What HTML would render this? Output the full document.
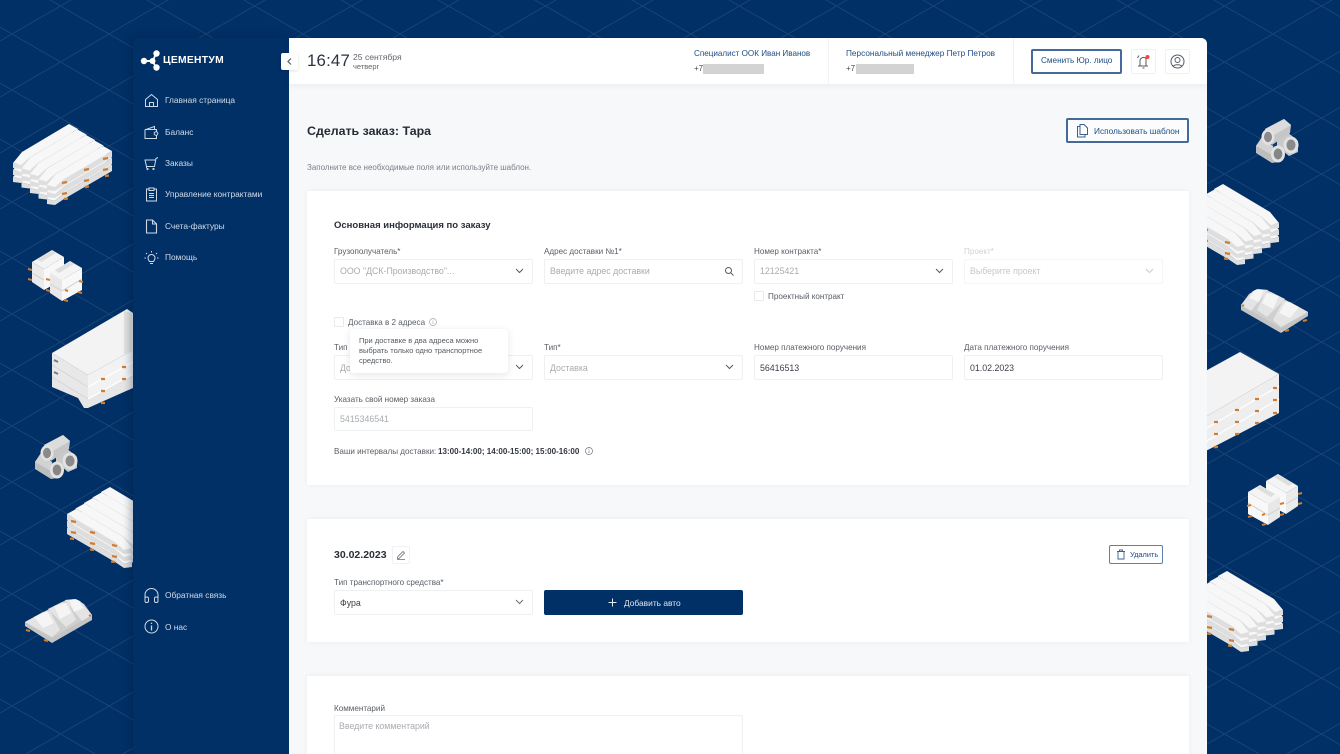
<!DOCTYPE html>
<html lang="ru"><head><meta charset="utf-8"><title>Цементум</title>
<style>
*{box-sizing:border-box}
html,body{margin:0;padding:0;width:1340px;height:754px;overflow:hidden;background:#003066;font-family:"Liberation Sans","Noto Sans CJK SC",sans-serif}
#bg{position:absolute;left:0;top:0;filter:blur(.35px)}
#side{position:absolute;left:133px;top:38px;width:157px;height:716px;background:#003066;border-radius:6px 0 0 0;box-shadow:-3px 0 8px rgba(0,20,50,.28)}
#main{position:absolute;left:289px;top:38px;width:918px;height:716px;background:#f6f8fa;border-radius:0 6px 0 0;overflow:hidden}
#abs{position:absolute;left:0;top:0;width:1340px;height:754px;overflow:hidden;filter:blur(.3px)}
.t{position:absolute;white-space:nowrap;line-height:12px;height:12px;font-size:8.1px;color:#5d636b}
.m{color:#d4dde8;font-size:8.35px}
.card{position:absolute;left:307px;width:882px;background:#fff;box-shadow:0 0 6px rgba(40,60,90,.05)}
.f{position:absolute;height:25px;width:199px;background:#fff;border:1px solid #eef1f2;border-radius:2px}
.ph{color:#a8abb0;font-size:8.8px}
.lb{color:#585d65;font-size:8.1px}
.val{color:#3a3f47;font-size:8.8px}
.cb{position:absolute;width:10px;height:10px;border:1px solid #e8eaec;background:#fff;border-radius:1px}
.btn{position:absolute;border:2px solid #45699a;border-radius:2px;background:#fff}
.box{position:absolute;background:#fff;border:1px solid #eff1f3;border-radius:2px}
svg.i{position:absolute;overflow:visible;fill:none}
</style></head><body>
<svg id="bg" width="1340" height="754" viewBox="0 0 1340 754">
<defs>
<pattern id="grid" x="12" y="34" width="97" height="56" patternUnits="userSpaceOnUse">
<path d="M0,0L97,56M97,0L0,56" stroke="#1e4577" stroke-width=".8" fill="none"/>
</pattern>
<g id="pile"><path d="M0,0L9,-11L56,-39L65,-34L17,-6L8,2Z" fill="#f7f7f7"/><path d="M0,0L8,2L17,-6L65,-34L65,-28L17,0L8,6L0,5Z" fill="#dedede"/></g>
<g id="col"><use href="#pile" y="14"/><use href="#pile" y="7"/><use href="#pile"/></g>
<g id="piles">
<use href="#col" x="13" y="163"/><use href="#col" x="21.5" y="168.5"/><use href="#col" x="30" y="174"/><use href="#col" x="38.500" y="179.500"/><use href="#col" x="47" y="185"/>
<g stroke="#cf7d33" stroke-width="2.200"><path d="M62,183l5,-1M84,170l5,-1M103,159l5,-1M62,194l5,-1M84,181l5,-1M103,170l5,-1M64,199l4,-.5M85,187l4,-.5M105,176l4,-.5"/></g>
</g>
<g id="blocks">
<path d="M32,262L52,250L64,257L44,269Z" fill="#f4f4f4"/><path d="M32,262L44,269V290L32,282Z" fill="#ebebeb"/><path d="M44,269L64,257V279L44,290Z" fill="#f8f8f8"/>
<path d="M37,259L52,251L56,253L41,262Z" fill="#dedede"/>
<path d="M50,273L70,261L82,268L62,280Z" fill="#f4f4f4"/><path d="M50,273L62,280V301L50,293Z" fill="#e8e8e8"/><path d="M62,280L82,268V290L62,301Z" fill="#f8f8f8"/>
<path d="M55,270L70,262L74,264L59,273Z" fill="#dedede"/>
<path d="M32,273L44,280M50,284L62,291M62,291L82,279" stroke="#cfcfcf" stroke-width="1"/>
<g stroke="#cf7d33" stroke-width="2"><path d="M28,269l4,1M28,279l4,1M46,279l4,1M46,290l4,1M79,281l4,1M78,292l4,1M64,300l4,1M65,290l3,1"/></g>
</g>
<g id="tubes">
<path d="M56,452L65,447L77,457L77,468L68,472L56,462Z" fill="#c9c9c9"/><ellipse cx="70" cy="461" rx="7.500" ry="8.500" fill="#e2e2e2"/><ellipse cx="70" cy="461" rx="4.500" ry="5.500" fill="#8a8a8a"/>
<path d="M41,453L35,462V469L51,479L57,478L52,462Z" fill="#bdbdbd"/><path d="M41,453L35,462L51,471L52,462Z" fill="#d2d2d2"/><ellipse cx="57" cy="470" rx="7" ry="8.500" fill="#e2e2e2"/><ellipse cx="57" cy="470" rx="4.300" ry="5.500" fill="#858585"/>
<path d="M44,445L63,435L70,441L69,449L51,461Z" fill="#c6c6c6"/><path d="M44,445L63,435L70,441L53,451Z" fill="#dcdcdc"/><ellipse cx="47" cy="453" rx="6.500" ry="8" fill="#e2e2e2"/><ellipse cx="47" cy="453" rx="4" ry="5.200" fill="#8a8a8a"/>
</g>
<g id="arch">
<path d="M25,622V626L52,643L92,620V615L52,636Z" fill="#c4c4c4"/>
<path d="M25,622L66,600L76,599L84,604L92,615L52,638Z" fill="#cfcfcf"/>
<path d="M25,622L43,612L50,611L60,630L52,637Z" fill="#e4e4e4"/><path d="M34,617L47,611L54,623L43,628Z" fill="#f5f5f5"/>
<path d="M48,609L62,602L68,603L76,620L66,627Z" fill="#e4e4e4"/><path d="M54,606L66,603L71,613L60,619Z" fill="#f5f5f5"/>
<path d="M65,600L75,599L80,601L92,615L82,621Z" fill="#e4e4e4"/><path d="M69,600L78,600L84,608L74,612Z" fill="#f5f5f5"/>
<g stroke="#cf7d33" stroke-width="2"><path d="M26,630l4,1M44,640l4,1M89,615l2,1"/></g>
</g>
<g id="slab">
<path d="M52,377L88,399V408L84,408L78,398L52,387ZM88,399L133,374V388L88,408Z" fill="#e6e6e6"/>
<path d="M52,365L88,387V399L52,377Z" fill="#e8e8e8"/><path d="M88,387L133,362V374L88,399Z" fill="#f2f2f2"/>
<path d="M52,353L88,375V387L52,365Z" fill="#e8e8e8"/><path d="M88,375L133,350V362L88,387Z" fill="#f2f2f2"/>
<path d="M52,353L127,309L133,313V350L88,375Z" fill="#f3f3f3"/>
<path d="M124,311L132,313V350L124,354Z" fill="#e2e2e2"/>
<path d="M88,387L133,362M88,399L133,374" stroke="#fff" stroke-width="1.200"/>
<path d="M54,360l4,2M54,372l4,2" stroke="#7a7a7a" stroke-width="2"/>
<g stroke="#cf7d33" stroke-width="2.200"><path d="M101,379l4,0M122,367l4,0M101,391l4,0M122,379l4,0M101,403l4,0"/></g>
</g>
</defs>
<rect width="1340" height="754" fill="#003066"/>
<rect width="1340" height="754" fill="url(#grid)"/>
<use href="#piles"/>
<use href="#blocks"/>
<use href="#slab"/>
<use href="#tubes"/>
<use href="#piles" transform="translate(179,363) scale(-1,1)"/>
<use href="#arch"/>
<use href="#tubes" transform="translate(1221,-316)"/>
<use href="#piles" transform="translate(1292,60) scale(-1,1)"/>
<use href="#arch" transform="translate(1333,-310) scale(-1,1)"/>
<use href="#blocks" transform="translate(1330,224) scale(-1,1)"/>
<use href="#piles" transform="translate(1296,447) scale(-1,1)"/>
<g>
<path d="M1200,374L1240,352L1279,374L1200,420Z" fill="#f3f3f3"/>
<path d="M1200,420L1279,374V413L1200,454Z" fill="#eeeeee"/>
<path d="M1200,432L1279,386M1200,445L1279,399" stroke="#fff" stroke-width="1.300"/>
<g stroke="#cf7d33" stroke-width="2.200"><path d="M1273,388l4,0M1255,399l4,0M1235,410l4,0M1214,422l4,0M1273,400l4,0M1255,411l4,0M1235,422l4,0M1214,434l4,0M1273,413l4,0M1255,423l4,0M1235,434l4,0M1214,447l4,0"/></g>
</g>
</svg>
<div id="side"></div>
<div id="main"></div>
<div id="abs">
<!-- top bar -->
<div style="position:absolute;left:289px;top:38px;width:918px;height:46px;background:#fff;border-radius:0 6px 0 0;box-shadow:0 2px 6px rgba(40,60,90,.05)"></div>
<div style="position:absolute;left:828px;top:38px;width:1px;height:46px;background:#f0f2f4"></div>
<div style="position:absolute;left:1013px;top:38px;width:1px;height:46px;background:#f0f2f4"></div>
<!-- logo -->
<svg class="i" style="left:140px;top:50px" width="24" height="22" viewBox="0 0 24 22"><g fill="#fff"><circle cx="4" cy="11" r="3.200"/><circle cx="12.500" cy="11" r="3"/><circle cx="16.500" cy="3.500" r="3.200"/><circle cx="16.500" cy="17.500" r="3.200"/><path d="M4 10h9v2H4zM12 10l3.500,-7 1.500 1-3.500 7zM12 12l3.500 6 1.500-1-3.500-6z"/></g></svg>
<div class="t" style="left:163px;top:55px;font-size:10.300px;font-weight:bold;color:#fff;letter-spacing:.3px">ЦЕМЕНТУМ</div>
<div style="position:absolute;left:281px;top:53px;width:17px;height:17px;background:#fff;border-radius:2px;box-shadow:0 1px 3px rgba(0,0,0,.12)"></div>
<svg class="i" style="left:281px;top:53px" width="17" height="17"><path d="M10 5.500L7 8.500l3 3" stroke="#555c66" stroke-width="1.200"/></svg>
<!-- menu icons -->
<svg class="i" style="left:144px;top:93px" width="15" height="15" viewBox="0 0 15 15" stroke="#cfd9e5" stroke-width="1"><path d="M1.500 6.500L7.500 1.500l6 5V13.500H1.500zM5.500 13.500V9.500h4v4"/></svg>
<div class="t m" style="left:165px;top:94px">Главная страница</div>
<svg class="i" style="left:144px;top:125px" width="15" height="15" viewBox="0 0 15 15" stroke="#cfd9e5" stroke-width="1"><path d="M2 4.500L10.500 1.500V4.500M1 4.500h11.500v2M12.500 10.500v3H1v-9"/><circle cx="12" cy="8.500" r="1.800"/></svg>
<div class="t m" style="left:165px;top:126px">Баланс</div>
<svg class="i" style="left:144px;top:156px" width="15" height="15" viewBox="0 0 15 15" stroke="#cfd9e5" stroke-width="1"><path d="M.5 4h11M1 4l1.500 6.500h8L12 2.500 14 1.500M2.500 10.500V12"/><circle cx="3.500" cy="13" r=".6"/><circle cx="9.500" cy="13" r=".6"/></svg>
<div class="t m" style="left:165px;top:157px">Заказы</div>
<svg class="i" style="left:144px;top:187px" width="15" height="15" viewBox="0 0 15 15" stroke="#cfd9e5" stroke-width="1"><path d="M5 2H2.500v12h10V2H10M5 1h5v2.500H5zM5 6.500h5M5 8.500h5M5 10.500h5"/></svg>
<div class="t m" style="left:165px;top:188px">Управление контрактами</div>
<svg class="i" style="left:144px;top:219px" width="15" height="15" viewBox="0 0 15 15" stroke="#cfd9e5" stroke-width="1.100"><path d="M2.500 1h6l4 4v9h-10zM8.500 1v4h4"/></svg>
<div class="t m" style="left:165px;top:220px">Счета-фактуры</div>
<svg class="i" style="left:144px;top:250px" width="15" height="15" viewBox="0 0 15 15" stroke="#cfd9e5" stroke-width="1"><path d="M5.500 11.500C4.500 10 4 9.500 4 8a3.500 3.500 0 0 1 7 0c0 1.500-.5 2-1.500 3.500zM6 13.500h3M7.500 1v1.500M2 3l1 1M13 3l-1 1M.5 8H2M13 8h1.500"/></svg>
<div class="t m" style="left:165px;top:251px">Помощь</div>
<svg class="i" style="left:144px;top:588px" width="15" height="15" viewBox="0 0 15 15" stroke="#cfd9e5" stroke-width="1"><path d="M1 13V7a6.500 6.500 0 0 1 13 0v6"/><rect x="1" y="9" width="3.500" height="5.500" rx="1.500"/><rect x="10.500" y="9" width="3.500" height="5.500" rx="1.500"/></svg>
<div class="t m" style="left:165px;top:589px">Обратная связь</div>
<svg class="i" style="left:144px;top:619px" width="15" height="15" viewBox="0 0 15 15" stroke="#cfd9e5" stroke-width="1"><circle cx="7.500" cy="7.500" r="6.500"/><path d="M7.500 6.500v5M7.500 3.800v1.200" stroke-width="1.300"/></svg>
<div class="t m" style="left:165px;top:621px">О нас</div>
<!-- header -->
<div class="t" style="left:307px;top:50px;height:22px;line-height:22px;font-size:16.800px;letter-spacing:.2px;color:#2c3240">16:47</div>
<div class="t" style="left:353px;top:51px;font-size:8.600px;color:#60656d">25 сентября</div>
<div class="t" style="left:353px;top:61px;font-size:7.500px;color:#60656d">четверг</div>
<div class="t" style="left:694px;top:48px;font-size:8.100px;color:#1f4c82">Специалист ООК Иван Иванов</div>
<div class="t" style="left:694px;top:63px;font-size:8px;color:#444a52">+7</div>
<div style="position:absolute;left:703px;top:64px;width:61px;height:10px;background:#d3d3d3"></div>
<div class="t" style="left:846px;top:48px;font-size:8.250px;color:#1f4c82">Персональный менеджер Петр Петров</div>
<div class="t" style="left:846px;top:63px;font-size:8px;color:#444a52">+7</div>
<div style="position:absolute;left:856px;top:64px;width:58px;height:10px;background:#d3d3d3"></div>
<div class="btn" style="left:1031px;top:49px;width:91px;height:25px"></div>
<div class="t" style="left:1041px;top:55px;font-size:8.200px;color:#1f4c82">Сменить Юр. лицо</div>
<div class="box" style="left:1131px;top:49px;width:25px;height:25px"></div>
<svg class="i" style="left:1135px;top:53px" width="17" height="17" viewBox="0 0 17 17" stroke="#555c66" stroke-width="1"><path d="M5 13V7.500a3.500 3.500 0 0 1 6 -2V13M3 13h10M2.500 5L4 2.500M7.500 15h2"/><circle cx="12.500" cy="4" r="2" fill="#f04a3e" stroke="none"/></svg>
<div class="box" style="left:1165px;top:49px;width:25px;height:25px"></div>
<svg class="i" style="left:1170px;top:54px" width="15" height="15" viewBox="0 0 15 15" stroke="#555c66" stroke-width="1"><circle cx="7.500" cy="7.500" r="6.500"/><circle cx="7.500" cy="6" r="2.500"/><path d="M3.300 12.300C4.300 10.300 10.700 10.300 11.700 12.300"/></svg>
<!-- title -->
<div class="t" style="left:307px;top:124px;height:14px;line-height:14px;font-size:12.400px;font-weight:bold;color:#262b33">Сделать заказ: Тара</div>
<div class="t" style="left:307px;top:162px;font-size:8px;color:#7a7f87">Заполните все необходимые поля или используйте шаблон.</div>
<div class="btn" style="left:1066px;top:118px;width:123px;height:25px;background:#fbfcfd"></div>
<svg class="i" style="left:1075px;top:123px" width="15" height="15" viewBox="0 0 15 15" stroke="#3c5f8c" stroke-width="1"><path d="M5 1.500h4l3.500 3.500v6.500H5zM5 3.500H2.500V14H10v-2.500"/></svg>
<div class="t" style="left:1094px;top:125px;font-size:8.300px;color:#1f4c82">Использовать шаблон</div>
<!-- card 1 -->
<div class="card" style="top:191px;height:294px"></div>
<div class="t" style="left:334px;top:220px;font-size:9.500px;font-weight:bold;color:#2a2f37">Основная информация по заказу</div>
<div class="t lb" style="left:334px;top:246px">Грузополучатель*</div>
<div class="f" style="left:334px;top:259px"></div>
<div class="t ph" style="left:340px;top:265px">ООО "ДСК-Производство"...</div>
<svg class="i" style="left:515px;top:267px" width="9" height="8"><path d="M1 2l3.500 3.500L8 2" stroke="#555c66" stroke-width="1"/></svg>
<div class="t lb" style="left:544px;top:246px">Адрес доставки №1*</div>
<div class="f" style="left:544px;top:259px"></div>
<div class="t ph" style="left:550px;top:265px">Введите адрес доставки</div>
<svg class="i" style="left:725px;top:267px" width="9" height="9"><circle cx="3.500" cy="3.500" r="3" stroke="#555c66"/><path d="M6 6l2.500 2.500" stroke="#555c66"/></svg>
<div class="t lb" style="left:754px;top:246px">Номер контракта*</div>
<div class="f" style="left:754px;top:259px"></div>
<div class="t ph" style="left:760px;top:265px">12125421</div>
<svg class="i" style="left:935px;top:267px" width="9" height="8"><path d="M1 2l3.500 3.500L8 2" stroke="#555c66" stroke-width="1"/></svg>
<div class="t" style="left:964px;top:246px;color:#cfd2d6">Проект*</div>
<div class="f" style="left:964px;top:259px;border-color:#f3f5f6"></div>
<div class="t" style="left:970px;top:265px;font-size:8.800px;color:#c4c7cb">Выберите проект</div>
<svg class="i" style="left:1145px;top:267px" width="9" height="8"><path d="M1 2l3.500 3.500L8 2" stroke="#c9ccd0" stroke-width="1"/></svg>
<div class="cb" style="left:754px;top:291px"></div>
<div class="t lb" style="left:768px;top:291px">Проектный контракт</div>
<div class="cb" style="left:334px;top:317px"></div>
<div class="t lb" style="left:348px;top:317px">Доставка в 2 адреса</div>
<svg class="i" style="left:429px;top:318px" width="8" height="8" stroke="#a5a9ae" stroke-width=".7"><circle cx="4" cy="4" r="3.500"/><path d="M4 3.500v2.500M4 1.800v.8"/></svg>
<div class="t lb" style="left:334px;top:342px">Тип</div>
<div class="f" style="left:334px;top:355px"></div>
<div class="t ph" style="left:340px;top:362px">Доставка</div>
<svg class="i" style="left:515px;top:363px" width="9" height="8"><path d="M1 2l3.500 3.500L8 2" stroke="#555c66" stroke-width="1"/></svg>
<div class="t lb" style="left:544px;top:342px">Тип*</div>
<div class="f" style="left:544px;top:355px"></div>
<div class="t ph" style="left:550px;top:362px">Доставка</div>
<svg class="i" style="left:725px;top:363px" width="9" height="8"><path d="M1 2l3.500 3.500L8 2" stroke="#555c66" stroke-width="1"/></svg>
<div class="t lb" style="left:754px;top:342px">Номер платежного поручения</div>
<div class="f" style="left:754px;top:355px"></div>
<div class="t val" style="left:760px;top:362px">56416513</div>
<div class="t lb" style="left:964px;top:342px">Дата платежного поручения</div>
<div class="f" style="left:964px;top:355px"></div>
<div class="t val" style="left:970px;top:362px">01.02.2023</div>
<div style="position:absolute;left:350px;top:329px;width:158px;height:44px;background:#fff;border-radius:4px;box-shadow:0 2px 8px rgba(30,50,80,.12)"></div>
<div class="t" style="left:359px;top:335px;font-size:7.500px;color:#555a62">При доставке в два адреса можно</div>
<div class="t" style="left:359px;top:345px;font-size:7.500px;color:#555a62">выбрать только одно транспортное</div>
<div class="t" style="left:359px;top:355px;font-size:7.500px;color:#555a62">средство.</div>
<div class="t lb" style="left:334px;top:394px">Указать свой номер заказа</div>
<div class="f" style="left:334px;top:407px;height:24px"></div>
<div class="t ph" style="left:340px;top:413px">5415346541</div>
<div class="t lb" style="left:334px;top:446px">Ваши интервалы доставки:</div>
<div class="t" style="left:438px;top:446px;color:#33383f;font-weight:bold;font-size:8.050px">13:00-14:00; 14:00-15:00; 15:00-16:00</div>
<svg class="i" style="left:585px;top:447px" width="8" height="8" stroke="#70757c" stroke-width=".7"><circle cx="4" cy="4" r="3.500"/><path d="M4 3.500v2.500M4 1.800v.8"/></svg>
<!-- card 2 -->
<div class="card" style="top:519px;height:123px"></div>
<div class="t" style="left:334px;top:549px;font-size:10.500px;font-weight:bold;color:#2a2f37">30.02.2023</div>
<div class="box" style="left:392px;top:546px;width:18px;height:18px"></div>
<svg class="i" style="left:396px;top:550px" width="10" height="10" stroke="#6a6f76" stroke-width=".8"><path d="M1.500 7L7 1.500l1.500 1.500L3 8.500H1.500zM1 9.500h8"/></svg>
<div class="btn" style="left:1109px;top:545px;width:54px;height:19px;border-width:1px;border-color:#5b80aa"></div>
<svg class="i" style="left:1116px;top:549px" width="10" height="11" stroke="#3c5f8c" stroke-width=".9"><path d="M2 3v7h6V3M1 2.500h8M3.500 2.500V1h3v1.500"/></svg>
<div class="t" style="left:1130px;top:549px;font-size:7.400px;color:#1f4c82">Удалить</div>
<div class="t lb" style="left:334px;top:577px">Тип транспортного средства*</div>
<div class="f" style="left:334px;top:590px"></div>
<div class="t val" style="left:340px;top:597px">Фура</div>
<svg class="i" style="left:515px;top:598px" width="9" height="8"><path d="M1 2l3.500 3.500L8 2" stroke="#6a6f76" stroke-width="1"/></svg>
<div style="position:absolute;left:544px;top:590px;width:199px;height:25px;background:#003066;border-radius:2px"></div>
<svg class="i" style="left:608px;top:598px" width="9" height="9"><path d="M4.500 .5v8M.5 4.500h8" stroke="#e4eaf1" stroke-width="1"/></svg>
<div class="t" style="left:624px;top:597px;font-size:8.400px;color:#dfe6ee">Добавить авто</div>
<!-- card 3 -->
<div class="card" style="top:676px;height:78px"></div>
<div class="t lb" style="left:334px;top:703px">Комментарий</div>
<div class="f" style="left:334px;top:715px;width:409px;height:50px"></div>
<div class="t ph" style="left:339px;top:720px">Введите комментарий</div>
</div>
</body></html>
